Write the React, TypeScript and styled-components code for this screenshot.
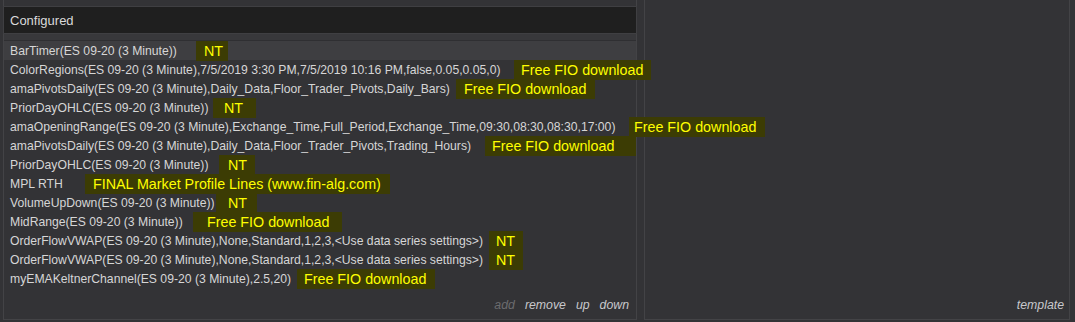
import styled, { createGlobalStyle } from "styled-components";

const GlobalStyle = createGlobalStyle`
    body {
        margin: 0;
        background: #333336;
        font-family: "Liberation Sans", Arial, sans-serif;
    }
`;

type Entry = {
    name: string
    tag: string
    at: number      // x where the tag box starts
    width: number   // tag box width
    pad: number     // text inset inside the tag box
}

const FREE = 'Free FIO download'

const entries: Entry[] = [
    { name: 'BarTimer(ES 09-20 (3 Minute))', tag: 'NT', at: 196, width: 32, pad: 8 },
    { name: 'ColorRegions(ES 09-20 (3 Minute),7/5/2019 3:30 PM,7/5/2019 10:16 PM,false,0.05,0.05,0)', tag: FREE, at: 514, width: 137, pad: 7 },
    { name: 'amaPivotsDaily(ES 09-20 (3 Minute),Daily_Data,Floor_Trader_Pivots,Daily_Bars)', tag: FREE, at: 456, width: 139, pad: 8 },
    { name: 'PriorDayOHLC(ES 09-20 (3 Minute))', tag: 'NT', at: 213, width: 43, pad: 11 },
    { name: 'amaOpeningRange(ES 09-20 (3 Minute),Exchange_Time,Full_Period,Exchange_Time,09:30,08:30,08:30,17:00)', tag: FREE, at: 629, width: 136, pad: 5 },
    { name: 'amaPivotsDaily(ES 09-20 (3 Minute),Daily_Data,Floor_Trader_Pivots,Trading_Hours)', tag: FREE, at: 485, width: 151, pad: 7 },
    { name: 'PriorDayOHLC(ES 09-20 (3 Minute))', tag: 'NT', at: 219, width: 36, pad: 9 },
    { name: 'MPL RTH', tag: 'FINAL Market Profile Lines (www.fin-alg.com)', at: 85, width: 305, pad: 8 },
    { name: 'VolumeUpDown(ES 09-20 (3 Minute))', tag: 'NT', at: 216, width: 41, pad: 12 },
    { name: 'MidRange(ES 09-20 (3 Minute))', tag: FREE, at: 193, width: 149, pad: 14 },
    { name: 'OrderFlowVWAP(ES 09-20 (3 Minute),None,Standard,1,2,3,<Use data series settings>)', tag: 'NT', at: 489, width: 34, pad: 7 },
    { name: 'OrderFlowVWAP(ES 09-20 (3 Minute),None,Standard,1,2,3,<Use data series settings>)', tag: 'NT', at: 489, width: 34, pad: 7 },
    { name: 'myEMAKeltnerChannel(ES 09-20 (3 Minute),2.5,20)', tag: FREE, at: 297, width: 138, pad: 7 },
]

// left edge of the row text on the page
const TEXT_X = 10

export default function App() {
    return (
        <>
            <GlobalStyle />
            <Page>
                <Panel $width={634}>
                    <Header>Configured</Header>
                    <List>
                        <ListTop />
                        {entries.map((entry, i) => (
                            <Row key={i} $selected={i === 0}>
                                <Name $width={entry.at - TEXT_X}>{entry.name}</Name>
                                <Tag $width={entry.width} $pad={entry.pad}>{entry.tag}</Tag>
                            </Row>
                        ))}
                    </List>
                    <Footer>
                        <Action $disabled>add</Action>
                        <Action>remove</Action>
                        <Action>up</Action>
                        <Action>down</Action>
                    </Footer>
                </Panel>
                <Panel $width={426}>
                    <Footer $right={5}>
                        <Action>template</Action>
                    </Footer>
                </Panel>
            </Page>
        </>
    )
}


const Page = styled.div`
    display: flex;
    gap: 7px;
    height: 322px;
    padding: 0 0 2px 3px;
    box-sizing: border-box;
`;

const Panel = styled.div<{ $width: number }>`
    width: ${(p) => p.$width}px;
    display: flex;
    flex-direction: column;
    border: 1px solid #434346;
    border-top: none;
    box-sizing: border-box;
    background: #333336;
`;

const Header = styled.div`
    margin: 6px -1px 0;
    height: 28px;
    box-sizing: border-box;
    display: flex;
    align-items: center;
    padding-left: 6px;
    background: #1f1f1f;
    border: 1px solid #3f3f42;
    color: #dadada;
    font-size: 13px;
`;

const List = styled.div`
    display: flex;
    flex-direction: column;
`;

const ListTop = styled.div`
    height: 6px;
    background: #38383b;
    border-bottom: 1px solid #2f2f32;
`;

const Row = styled.div<{ $selected?: boolean }>`
    height: 19px;
    display: flex;
    align-items: center;
    padding-left: ${TEXT_X - 4}px;
    background: ${(p) => (p.$selected ? '#3e3e41' : 'transparent')};
    white-space: nowrap;
`;

const Name = styled.span<{ $width: number }>`
    flex: 0 0 ${(p) => p.$width}px;
    color: #d6d6d6;
    font-size: 12.2px;
`;

const Tag = styled.span<{ $width: number; $pad: number }>`
    flex: 0 0 ${(p) => p.$width}px;
    height: 20px;
    box-sizing: border-box;
    padding-left: ${(p) => p.$pad}px;
    display: flex;
    align-items: center;
    background: #3c3c04;
    color: #ffff00;
    font-size: 14.3px;
    position: relative;
    z-index: 1;
`;

const Footer = styled.div<{ $right?: number }>`
    margin-top: auto;
    display: flex;
    justify-content: flex-end;
    gap: 10px;
    padding: 0 ${(p) => p.$right ?? 7}px 7px 0;
`;

const Action = styled.span<{ $disabled?: boolean }>`
    font-size: 12.3px;
    font-style: italic;
    color: ${(p) => (p.$disabled ? '#6b6b6e' : '#c8c8cc')};
`;
